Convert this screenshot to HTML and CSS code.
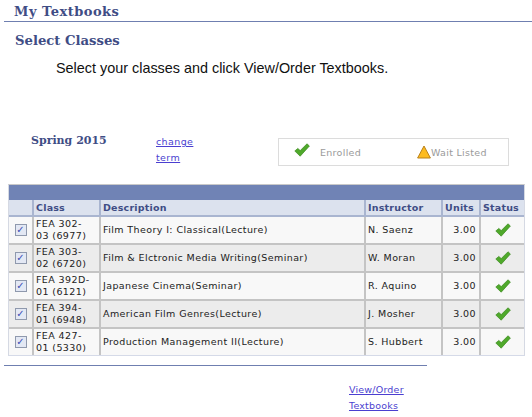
FILE: index.html
```html
<!DOCTYPE html>
<html lang="en">
<head>
    <meta charset="UTF-8">
    <meta name="viewport" content="width=device-width, initial-scale=1.0">
    <title>My Textbooks</title>
    <link rel="stylesheet" href="styles.css">
</head>
<body>
    <svg class="icon-defs" width="0" height="0">
        <symbol id="check" viewBox="0 0 16 14">
            <path d="M0.8 8 L3.8 5.4 L6.2 7.6 L13 0.8 L15.4 3 L6.2 13.2 Z" fill="#4fa92b" stroke="#3c8a1f" stroke-width="0.7" stroke-linejoin="round"/>
        </symbol>
    </svg>

    <h1 class="page-title">My Textbooks</h1>
    <h2 class="section-title">Select Classes</h2>
    <p class="intro">Select your classes and click View/Order Textbooks.</p>

    <div class="term-row">
        <div class="term-name">Spring 2015</div>
        <a class="link term-link" href="#">change term</a>
        <div class="legend">
            <svg class="legend-check"><use href="#check"/></svg>
            <span class="legend-enrolled">Enrolled</span>
            <svg class="legend-warn" viewBox="0 0 14 14">
                <path d="M7 1 L13.4 13 L0.6 13 Z" fill="#fdbb1f" stroke="#b9811a" stroke-width="1" stroke-linejoin="round"/>
            </svg>
            <span>Wait Listed</span>
        </div>
    </div>

    <div class="grid-wrap">
        <div class="grid-band"></div>
        <table class="grid">
            <colgroup>
                <col class="col-check">
                <col class="col-class">
                <col class="col-desc">
                <col class="col-instr">
                <col class="col-units">
                <col class="col-status">
            </colgroup>
            <thead>
                <tr>
                    <th></th>
                    <th>Class</th>
                    <th>Description</th>
                    <th>Instructor</th>
                    <th>Units</th>
                    <th>Status</th>
                </tr>
            </thead>
            <tbody>
                <tr>
                    <td class="check-cell"><span class="checkbox">&#10003;</span></td>
                    <td class="class-cell">FEA 302-<br>03 (6977)</td>
                    <td>Film Theory I: Classical(Lecture)</td>
                    <td>N. Saenz</td>
                    <td class="units">3.00</td>
                    <td class="status"><svg class="status-check"><use href="#check"/></svg></td>
                </tr>
                <tr class="alt">
                    <td class="check-cell"><span class="checkbox">&#10003;</span></td>
                    <td class="class-cell">FEA 303-<br>02 (6720)</td>
                    <td>Film &amp; Elctronic Media Writing(Seminar)</td>
                    <td>W. Moran</td>
                    <td class="units">3.00</td>
                    <td class="status"><svg class="status-check"><use href="#check"/></svg></td>
                </tr>
                <tr>
                    <td class="check-cell"><span class="checkbox">&#10003;</span></td>
                    <td class="class-cell">FEA 392D-<br>01 (6121)</td>
                    <td>Japanese Cinema(Seminar)</td>
                    <td>R. Aquino</td>
                    <td class="units">3.00</td>
                    <td class="status"><svg class="status-check"><use href="#check"/></svg></td>
                </tr>
                <tr class="alt">
                    <td class="check-cell"><span class="checkbox">&#10003;</span></td>
                    <td class="class-cell">FEA 394-<br>01 (6948)</td>
                    <td>American Film Genres(Lecture)</td>
                    <td>J. Mosher</td>
                    <td class="units">3.00</td>
                    <td class="status"><svg class="status-check"><use href="#check"/></svg></td>
                </tr>
                <tr>
                    <td class="check-cell"><span class="checkbox">&#10003;</span></td>
                    <td class="class-cell">FEA 427-<br>01 (5330)</td>
                    <td>Production Management II(Lecture)</td>
                    <td>S. Hubbert</td>
                    <td class="units">3.00</td>
                    <td class="status"><svg class="status-check"><use href="#check"/></svg></td>
                </tr>
            </tbody>
        </table>
    </div>

    <div class="bottom-rule"></div>
    <a class="link order-link" href="#">View/Order Textbooks</a>
</body>
</html>
```

FILE: styles.css
```css
body {
    margin: 0;
    width: 532px;
    height: 417px;
    overflow: hidden;
    background-color: #fff;
    font-family: "DejaVu Sans", sans-serif;
    font-size: 9.5px;
    letter-spacing: 0.4px;
    color: #222;
}

.icon-defs {
    display: block;
    height: 0;
}

.page-title {
    margin: 0 0 0 4px;
    padding: 4px 0 0 10px;
    height: 17px;
    border-bottom: 1px solid #6f7fb0;
    font-family: "DejaVu Serif", serif;
    font-size: 13px;
    letter-spacing: 0.5px;
    line-height: 15px;
    color: #3f4d85;
}

.section-title {
    margin: 0;
    padding: 10px 0 0 15px;
    font-family: "DejaVu Serif", serif;
    font-size: 13.2px;
    letter-spacing: 0;
    line-height: 18px;
    color: #3f4d85;
}

.intro {
    margin: 0;
    padding: 9px 0 0 56px;
    font-family: "Liberation Sans", sans-serif;
    font-size: 14.4px;
    letter-spacing: 0;
    line-height: 18px;
    color: #111;
}

.term-row {
    display: flex;
    align-items: flex-start;
    margin-top: 54px;
    height: 53px;
}

.term-name {
    width: 125px;
    padding: 3px 0 0 31px;
    font-family: "DejaVu Serif", serif;
    font-weight: bold;
    font-size: 11px;
    letter-spacing: 0;
    line-height: 14px;
    color: #3f4d85;
}

.link {
    color: #4b3fd0;
    text-decoration: underline;
}

.term-link {
    width: 50px;
    padding-top: 3px;
    line-height: 16px;
}

.legend {
    display: flex;
    align-items: center;
    box-sizing: border-box;
    width: 231px;
    height: 28px;
    margin: 7px 0 0 72px;
    border: 1px solid #dcdcdc;
    letter-spacing: 0.3px;
    color: #9a9a9a;
}

.legend-check {
    width: 16px;
    height: 14px;
    margin: -4px 0 0 15px;
}

.legend-enrolled {
    margin-left: 10px;
    width: 97px;
}

.legend-warn {
    width: 14px;
    height: 14px;
}

.grid-wrap {
    box-sizing: border-box;
    width: 517px;
    margin-left: 8px;
    border: 1px solid #d5d9e3;
    border-top-color: #c9c9c9;
    border-bottom-color: #d5dae8;
}

.grid-band {
    height: 15px;
    background-color: #7083b5;
}

.grid {
    width: 515px;
    table-layout: fixed;
    border-collapse: collapse;
}

.col-check { width: 24px; }
.col-class { width: 67px; }
.col-desc { width: 265px; }
.col-instr { width: 77px; }
.col-units { width: 38px; }
.col-status { width: 44px; }

.grid th {
    height: 15px;
    padding: 0 2px;
    background-color: #dce2ee;
    border-left: 2px solid #a9b5d0;
    border-bottom: 2px solid #a9b5d0;
    text-align: left;
    font-size: 9.5px;
    letter-spacing: 0.2px;
    color: #3f4d85;
}

.grid th:first-child {
    border-left: 0;
}

.grid td {
    height: 26px;
    padding: 0 2px;
    border-left: 2px solid #c4c4c4;
    border-bottom: 2px solid #c4c4c4;
    background-color: #f8f8f8;
    line-height: 12px;
    white-space: nowrap;
}

.grid td:first-child {
    border-left: 0;
}

.grid tr:last-child td {
    border-bottom: 0;
}

.grid .alt td {
    background-color: #ececec;
}

.check-cell {
    text-align: center;
}

.checkbox {
    display: inline-block;
    box-sizing: border-box;
    width: 12px;
    height: 12px;
    border: 1px solid #8f99ad;
    background-color: #e3e8f4;
    font-size: 10px;
    font-weight: bold;
    line-height: 10px;
    letter-spacing: 0;
    text-align: center;
    color: #3a4fb5;
    vertical-align: middle;
}

.grid .units {
    padding-right: 3px;
    text-align: right;
}

.status {
    text-align: center;
}

.status-check {
    display: inline-block;
    width: 16px;
    height: 14px;
    vertical-align: middle;
}

.bottom-rule {
    width: 423px;
    margin: 9px 0 0 4px;
    border-top: 1px solid #6f7fb0;
}

.order-link {
    display: block;
    width: 70px;
    margin: 16px 0 0 349px;
    letter-spacing: 0.2px;
    line-height: 16px;
}
```
